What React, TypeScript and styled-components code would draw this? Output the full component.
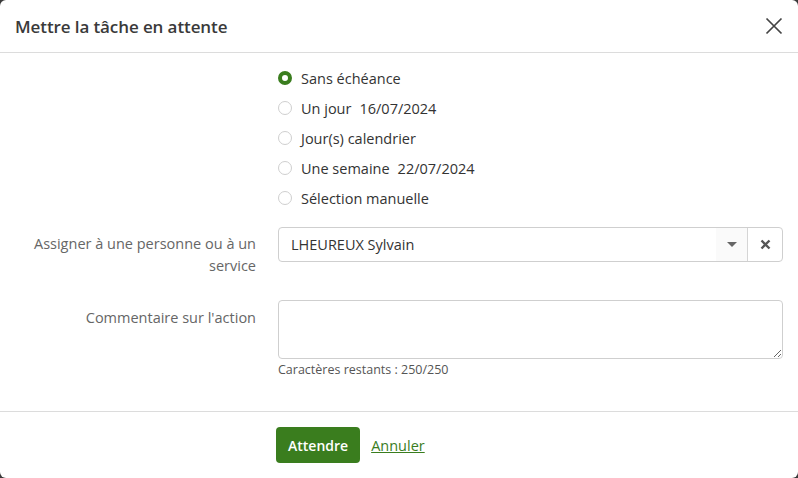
import React from "react";
import styled, { createGlobalStyle } from "styled-components";

const Global = createGlobalStyle`
  html, body { margin: 0; padding: 0; background: #3a3a3a; }
  body { font-family: "Open Sans", "Noto Sans", sans-serif; }
  * { box-sizing: border-box; }
`;

const Dialog = styled.div`
  width: 798px;
  height: 478px;
  background: #fff;
  border-radius: 6px;
  overflow: hidden;
  display: flex;
  flex-direction: column;
  color: #333;
`;

const Header = styled.div`
  height: 53px;
  border-bottom: 1px solid #dcdcdc;
  display: flex;
  align-items: center;
  justify-content: space-between;
  padding: 0 12px 0 15px;
`;

const Title = styled.h1`
  margin: 0;
  font-size: 17px;
  font-weight: 600;
  color: #3a3a3a;
  letter-spacing: -0.1px;
`;

const CloseButton = styled.button`
  border: none;
  background: none;
  padding: 0;
  width: 24px;
  height: 24px;
  display: flex;
  align-items: center;
  justify-content: center;
  cursor: pointer;
`;

const Body = styled.div`
  flex: 1;
  padding: 10px 15px 0 0;
  display: flex;
  flex-direction: column;
`;

const Row = styled.div<{ $mt?: number }>`
  display: grid;
  grid-template-columns: 256px 1fr;
  column-gap: 22px;
  margin-top: ${(p) => p.$mt ?? 0}px;
`;

const Label = styled.label<{ $pt?: number }>`
  text-align: right;
  color: #666;
  font-size: 14.5px;
  line-height: 22px;
  padding-top: ${(p) => p.$pt ?? 0}px;
`;

const RadioList = styled.div`
  display: flex;
  flex-direction: column;
`;

const RadioRow = styled.label`
  height: 30px;
  display: flex;
  align-items: center;
  gap: 9px;
  font-size: 14.5px;
  color: #333;
`;

const RadioDot = styled.span<{ $checked?: boolean }>`
  width: 14px;
  height: 14px;
  border-radius: 50%;
  flex: none;
  background: #fff;
  border: ${(p) => (p.$checked ? "4px solid #3a7d1e" : "1px solid #cfcfcf")};
`;

const DateText = styled.span`
  margin-left: 8px;
`;

const Select = styled.div`
  height: 35px;
  border: 1px solid #cfcfcf;
  border-radius: 4px;
  display: flex;
  align-items: stretch;
  overflow: hidden;
`;

const SelectValue = styled.div`
  flex: 1;
  display: flex;
  align-items: center;
  padding-left: 12px;
  font-size: 14.5px;
  color: #333;
`;

const ArrowZone = styled.div`
  width: 32px;
  display: flex;
  align-items: center;
  justify-content: center;
  background: #fafafa;
  border-right: 1px solid #d5d5d5;
`;

const Caret = styled.span`
  width: 0;
  height: 0;
  border-left: 5px solid transparent;
  border-right: 5px solid transparent;
  border-top: 5px solid #666;
`;

const ClearZone = styled.div`
  width: 34px;
  display: flex;
  align-items: center;
  justify-content: center;
`;

const FieldCol = styled.div`
  display: flex;
  flex-direction: column;
`;

const TextArea = styled.textarea`
  height: 59px;
  border: 1px solid #cfcfcf;
  border-radius: 4px;
  resize: vertical;
  font-family: inherit;
  font-size: 14px;
  padding: 6px 10px;
  outline: none;
`;

const Helper = styled.div`
  font-size: 12.5px;
  color: #555;
  margin-top: 3px;
  line-height: 16px;
`;

const Footer = styled.div`
  height: 67px;
  border-top: 1px solid #dcdcdc;
  display: flex;
  align-items: center;
  gap: 11px;
  padding-left: 276px;
`;

const PrimaryButton = styled.button`
  height: 36px;
  padding: 0 12px;
  background: #3a7d1e;
  color: #fff;
  border: none;
  border-radius: 4px;
  font-family: inherit;
  font-size: 14px;
  font-weight: 600;
  cursor: pointer;
`;

const LinkButton = styled.a`
  color: #3a7d1e;
  font-size: 14.5px;
  text-decoration: underline;
  cursor: pointer;
`;

const options = [
  { label: "Sans échéance", checked: true },
  { label: "Un jour", date: "16/07/2024" },
  { label: "Jour(s) calendrier" },
  { label: "Une semaine", date: "22/07/2024" },
  { label: "Sélection manuelle" },
];

export default function App() {
  return (
    <>
      <Global />
      <Dialog>
        <Header>
          <Title>Mettre la tâche en attente</Title>
          <CloseButton aria-label="Fermer">
            <svg width="18" height="18" viewBox="0 0 18 18">
              <path d="M1.5 1.5L16.5 16.5M16.5 1.5L1.5 16.5" stroke="#444" strokeWidth="1.7" />
            </svg>
          </CloseButton>
        </Header>
        <Body>
          <Row>
            <div />
            <RadioList>
              {options.map((o) => (
                <RadioRow key={o.label}>
                  <RadioDot $checked={o.checked} />
                  <span>
                    {o.label}
                    {o.date && <DateText>{o.date}</DateText>}
                  </span>
                </RadioRow>
              ))}
            </RadioList>
          </Row>
          <Row $mt={14}>
            <Label $pt={6}>Assigner à une personne ou à un service</Label>
            <Select>
              <SelectValue>LHEUREUX Sylvain</SelectValue>
              <ArrowZone>
                <Caret />
              </ArrowZone>
              <ClearZone>
                <svg width="11" height="11" viewBox="0 0 11 11">
                  <path d="M1.5 1.5L9.5 9.5M9.5 1.5L1.5 9.5" stroke="#555" strokeWidth="2.4" />
                </svg>
              </ClearZone>
            </Select>
          </Row>
          <Row $mt={23}>
            <Label $pt={7}>Commentaire sur l'action</Label>
            <FieldCol>
              <TextArea />
              <Helper>Caractères restants : 250/250</Helper>
            </FieldCol>
          </Row>
        </Body>
        <Footer>
          <PrimaryButton>Attendre</PrimaryButton>
          <LinkButton>Annuler</LinkButton>
        </Footer>
      </Dialog>
    </>
  );
}
